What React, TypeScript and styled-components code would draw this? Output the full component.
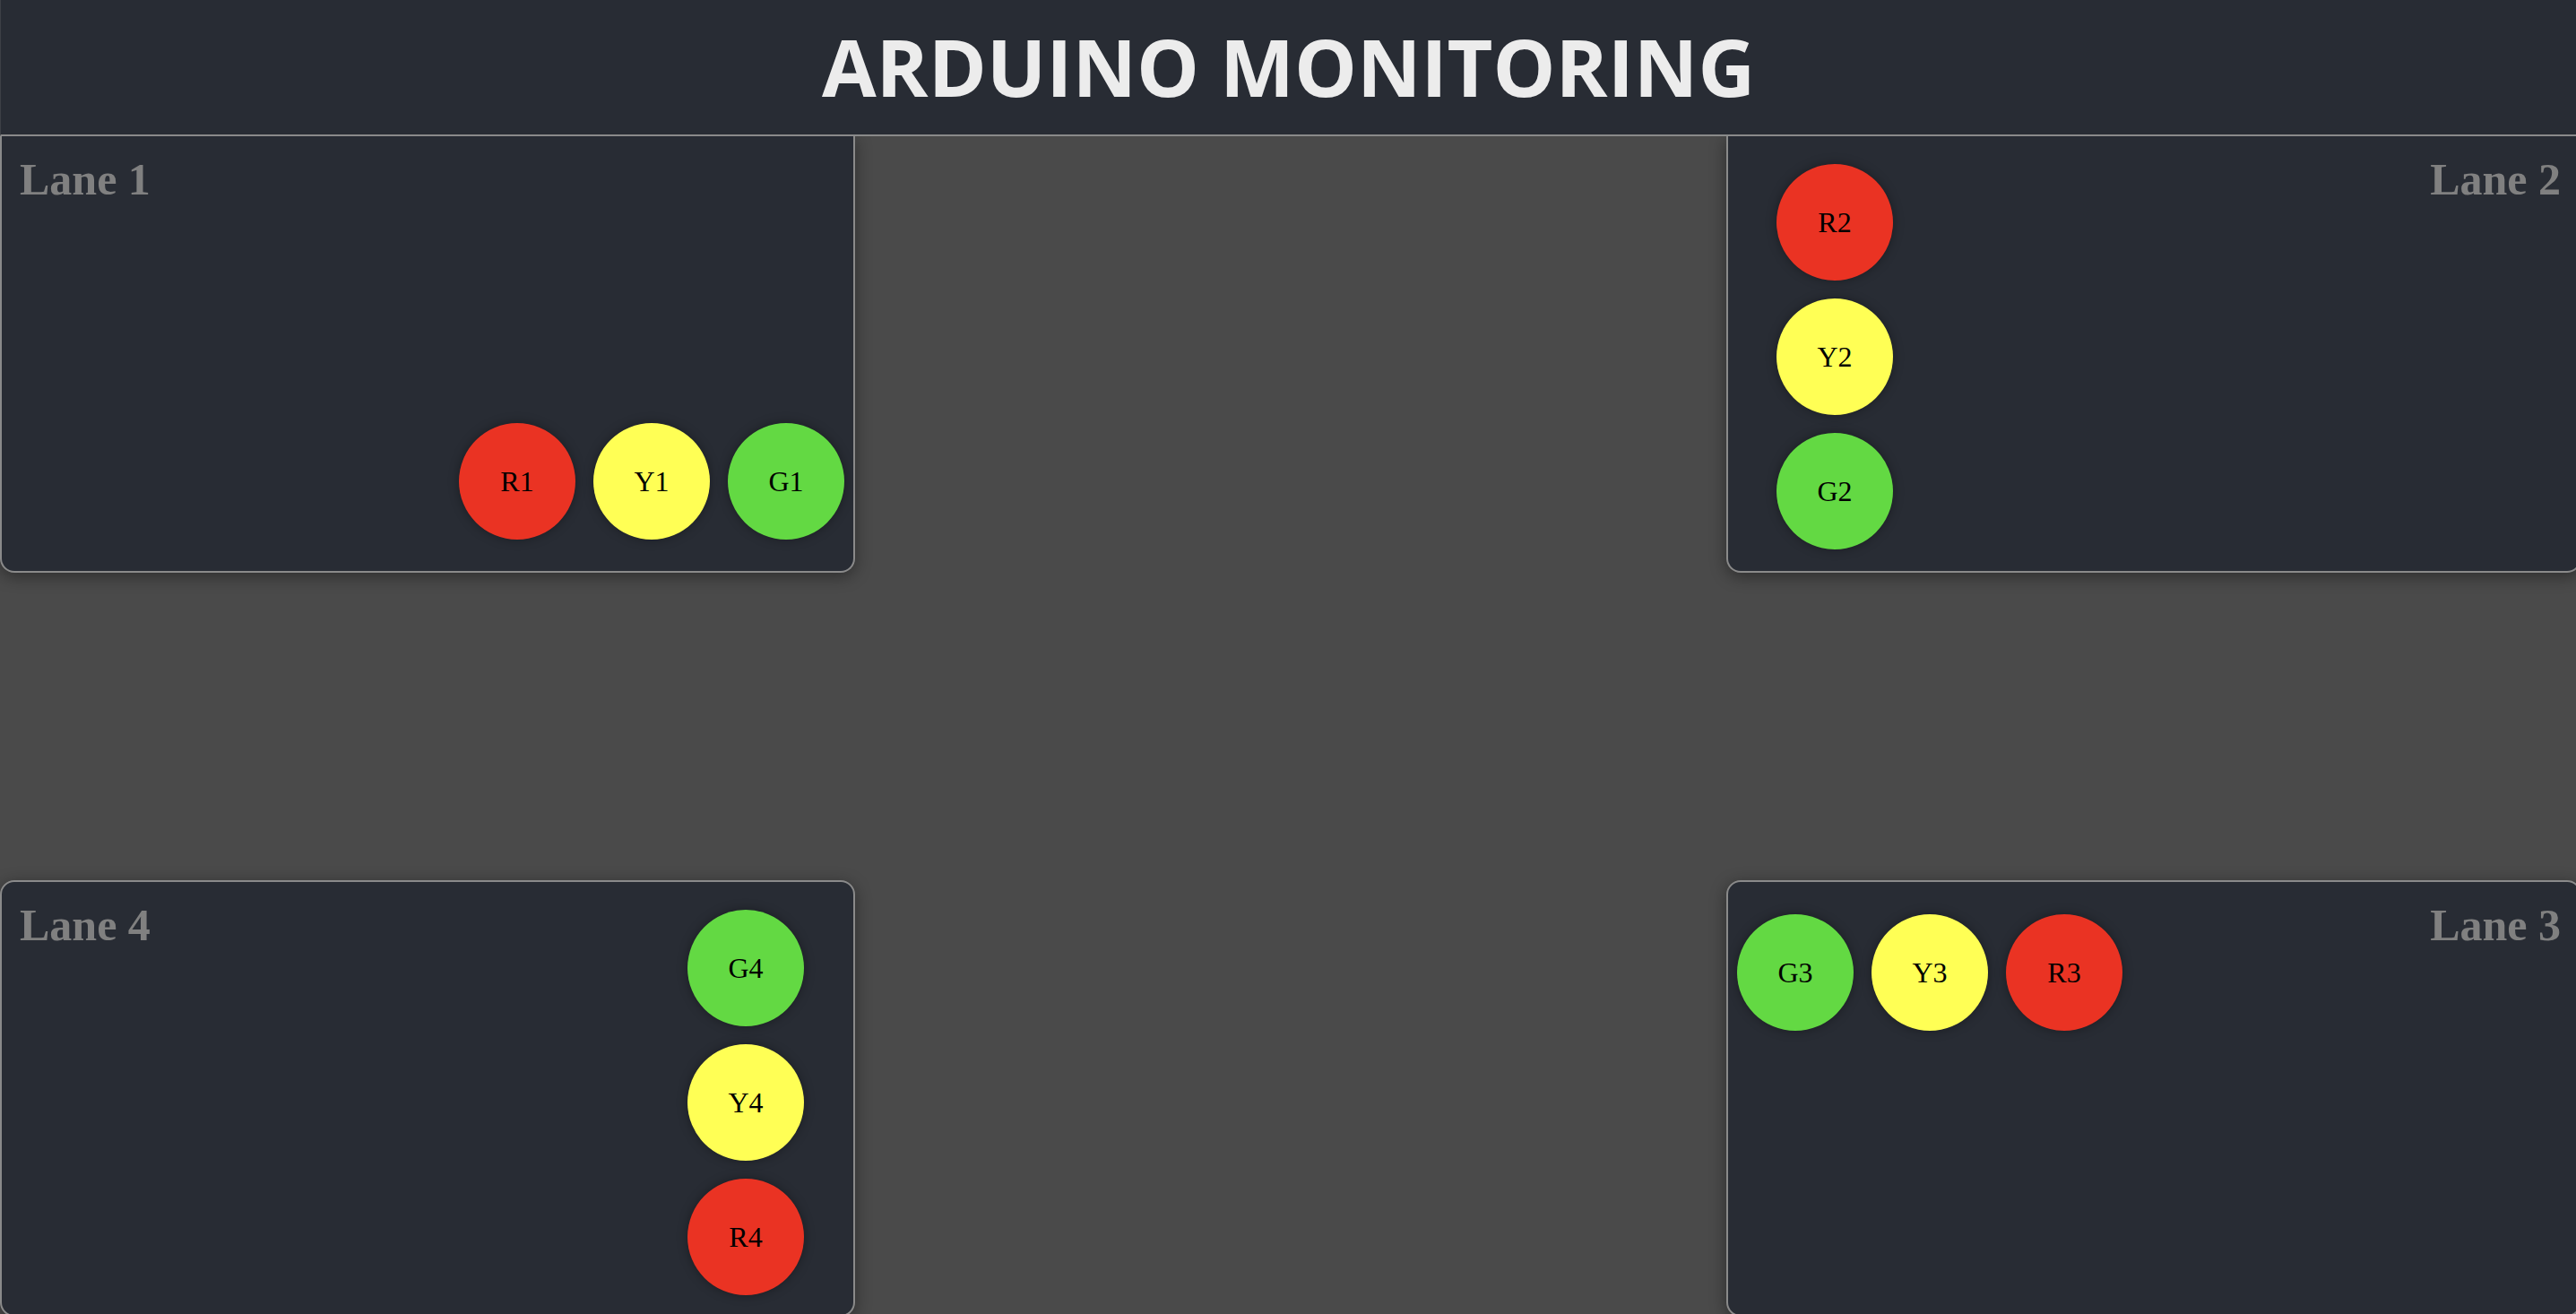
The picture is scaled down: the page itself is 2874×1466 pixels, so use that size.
import React from "react";
import styled, { createGlobalStyle, css } from "styled-components";

const Global = createGlobalStyle`
  html, body {
    margin: 0;
    padding: 0;
    width: 2874px;
    height: 1466px;
    overflow: hidden;
    background: #4a4a4a;
  }
  #root { width: 2874px; height: 1466px; overflow: hidden; }
`;

const Page = styled.div`
  width: 2874px;
  height: 1466px;
  overflow: hidden;
  display: grid;
  grid-template-columns: 954px 972px 948px;
  grid-template-rows: 152px 487px 343px 487px;
  grid-template-areas:
    "head head head"
    "l1 . l2"
    ". . ."
    "l4 . l3";
  background: #4a4a4a;
`;

const Header = styled.header`
  grid-area: head;
  box-sizing: border-box;
  background: #282c34;
  border-bottom: 2px solid #8a8a8a;
  border-left: 1px solid #3d4046;
  display: flex;
  align-items: center;
  justify-content: center;
  position: relative;
  z-index: 2;
`;

const Title = styled.h1`
  margin: 0;
  font-family: "Open Sans", "Noto Sans", sans-serif;
  font-weight: 700;
  font-size: 88px;
  line-height: 1;
  color: #ececec;
  padding-bottom: 2px;
`;

const Panel = styled.section<{ $area: string; $top: boolean; $reverse: boolean }>`
  grid-area: ${(p) => p.$area};
  box-sizing: border-box;
  min-width: 0;
  background: #282c34;
  border: 2px solid #8a8a8a;
  border-radius: 16px;
  box-shadow: 0 4px 18px rgba(0, 0, 0, 0.4);
  display: flex;
  flex-direction: ${(p) => (p.$reverse ? "row-reverse" : "row")};
  justify-content: space-between;
  align-items: flex-start;
  position: relative;
  z-index: 1;
  ${(p) =>
    p.$reverse &&
    css`
      margin-right: -6px;
    `}
  ${(p) =>
    p.$top &&
    css`
      border-top: none;
      border-top-left-radius: 0;
      border-top-right-radius: 0;
    `}
`;

const LaneTitle = styled.h2<{ $right: boolean }>`
  margin: 21px ${(p) => (p.$right ? "21px" : "0")} 0 ${(p) => (p.$right ? "0" : "20px")};
  font-family: "Liberation Serif", "Times New Roman", serif;
  font-weight: bold;
  font-size: 50px;
  line-height: 55px;
  color: #808080;
  white-space: nowrap;
`;

const Lights = styled.div<{ $column: boolean; $margin: string; $bottom: boolean }>`
  display: flex;
  flex-direction: ${(p) => (p.$column ? "column" : "row")};
  gap: 20px;
  margin: ${(p) => p.$margin};
  align-self: ${(p) => (p.$bottom ? "flex-end" : "flex-start")};
`;

const colors: Record<string, string> = {
  R: "#ea3323",
  Y: "#ffff55",
  G: "#63d943",
};

const Light = styled.div<{ $color: string }>`
  width: 130px;
  height: 130px;
  border-radius: 50%;
  background: ${(p) => p.$color};
  box-shadow: 0 0 12px rgba(0, 0, 0, 0.35);
  display: flex;
  align-items: center;
  justify-content: center;
  font-family: "Liberation Serif", "Times New Roman", serif;
  font-size: 32px;
  color: #000;
`;

type LaneDef = {
  name: string;
  area: string;
  top: boolean;
  titleRight: boolean;
  lights: string[];
  column: boolean;
  margin: string;
  bottom: boolean;
};

const lanes: LaneDef[] = [
  { name: "Lane 1", area: "l1", top: true, titleRight: false, lights: ["R1", "Y1", "G1"], column: false, margin: "0 10px 35px 0", bottom: true },
  { name: "Lane 2", area: "l2", top: true, titleRight: true, lights: ["R2", "Y2", "G2"], column: true, margin: "31px 0 0 54px", bottom: false },
  { name: "Lane 4", area: "l4", top: false, titleRight: false, lights: ["G4", "Y4", "R4"], column: true, margin: "31px 55px 0 0", bottom: false },
  { name: "Lane 3", area: "l3", top: false, titleRight: true, lights: ["G3", "Y3", "R3"], column: false, margin: "36px 0 0 10px", bottom: false },
];

export default function App() {
  return (
    <>
      <Global />
      <Page>
        <Header>
          <Title>ARDUINO MONITORING</Title>
        </Header>
        {lanes.map((lane) => (
          <Panel key={lane.name} $area={lane.area} $top={lane.top} $reverse={lane.titleRight}>
            <LaneTitle $right={lane.titleRight}>{lane.name}</LaneTitle>
            <Lights $column={lane.column} $margin={lane.margin} $bottom={lane.bottom}>
              {lane.lights.map((l) => (
                <Light key={l} $color={colors[l[0]]}>
                  {l}
                </Light>
              ))}
            </Lights>
          </Panel>
        ))}
      </Page>
    </>
  );
}
